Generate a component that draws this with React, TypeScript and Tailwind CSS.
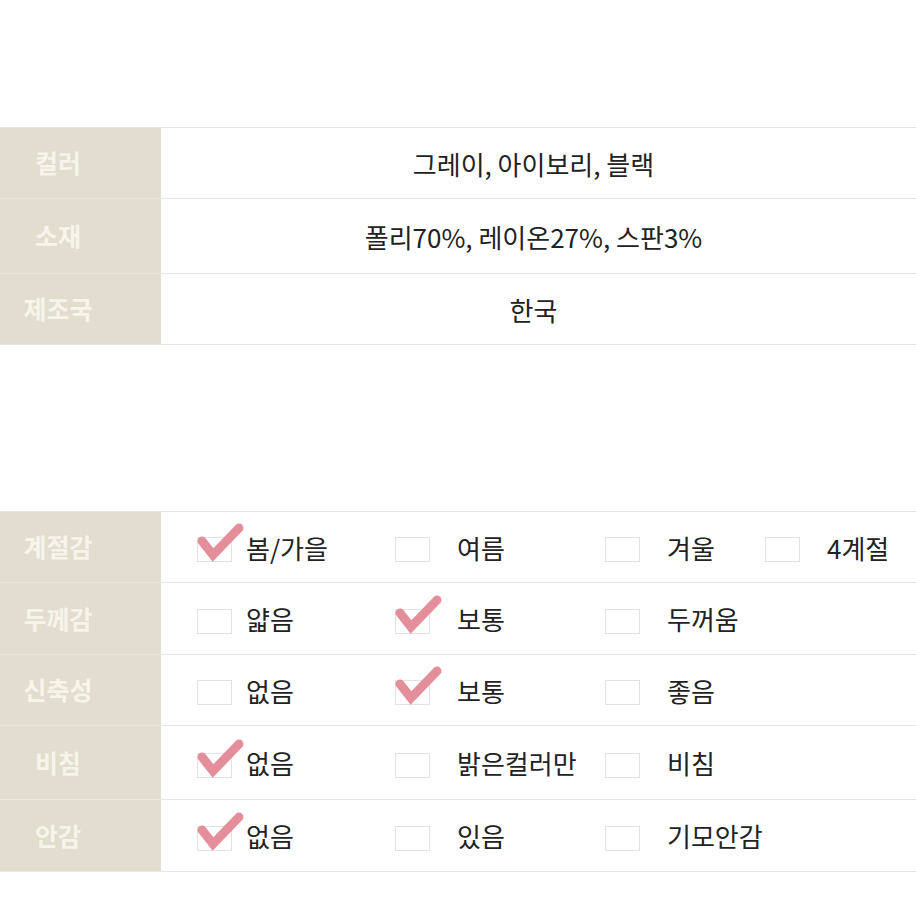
import React from "react";

const font = { fontFamily: '"Noto Sans CJK KR", "Noto Sans", sans-serif' };

type Opt = { label: string; checked?: boolean };

const topRows = [
  { label: "컬러", value: "그레이, 아이보리, 블랙", h: "h-[71px]" },
  { label: "소재", value: "폴리70%, 레이온27%, 스판3%", h: "h-[75px]" },
  { label: "제조국", value: "한국", h: "h-[72px]" },
];

const bottomRows: { label: string; h: string; opts: Opt[] }[] = [
  {
    label: "계절감",
    h: "h-[71px]",
    opts: [
      { label: "봄/가을", checked: true },
      { label: "여름" },
      { label: "겨울" },
      { label: "4계절" },
    ],
  },
  {
    label: "두께감",
    h: "h-[72px]",
    opts: [{ label: "얇음" }, { label: "보통", checked: true }, { label: "두꺼움" }],
  },
  {
    label: "신축성",
    h: "h-[71px]",
    opts: [{ label: "없음" }, { label: "보통", checked: true }, { label: "좋음" }],
  },
  {
    label: "비침",
    h: "h-[74px]",
    opts: [{ label: "없음", checked: true }, { label: "밝은컬러만" }, { label: "비침" }],
  },
  {
    label: "안감",
    h: "h-[73px]",
    opts: [{ label: "없음", checked: true }, { label: "있음" }, { label: "기모안감" }],
  },
];

function Check() {
  return (
    <svg
      className="absolute left-[-1px] top-[-16px]"
      width="48"
      height="40"
      viewBox="0 0 48 40"
    >
      <polyline
        points="5,19 16,33 42,6"
        fill="none"
        stroke="#e48e9b"
        strokeWidth="9"
        strokeLinecap="round"
        strokeLinejoin="miter"
      />
    </svg>
  );
}

function Box({ checked }: { checked?: boolean }) {
  return (
    <div className="relative w-[35px] h-[25px] border border-[#e2e2e2] bg-white shrink-0 mt-[5px]">
      {checked && <Check />}
    </div>
  );
}

function Label({ text }: { text: string }) {
  return (
    <div className="w-[161px] shrink-0 h-full bg-[#e3ddcf] flex items-center">
      <span className="w-[116px] text-center text-[25px] font-bold text-[#f7f4ec]">
        {text}
      </span>
    </div>
  );
}

export default function App() {
  return (
    <div className="w-[916px] h-[916px] bg-white overflow-hidden" style={font}>
      <div className="pt-[127px]">
        {topRows.map((r, i) => (
          <div
            key={i}
            className={`flex ${r.h} border-t border-[#e6e6e6] ${i === topRows.length - 1 ? "border-b" : ""}`}
          >
            <Label text={r.label} />
            <div className="flex-1 flex items-center justify-center pr-[10px] text-[26px] text-[#222]">
              {r.value}
            </div>
          </div>
        ))}
      </div>

      <div className="mt-[166px]">
        {bottomRows.map((r, i) => (
          <div
            key={i}
            className={`flex ${r.h} border-t border-[#e6e6e6] ${i === bottomRows.length - 1 ? "border-b" : ""}`}
          >
            <Label text={r.label} />
            <div className="flex-1 grid grid-cols-[198px_210px_160px_1fr] items-center pl-[36px]">
              {r.opts.map((o, j) => (
                <div
                  key={j}
                  className={`flex items-center ${j === 0 ? "gap-[14px]" : "gap-[27px]"}`}
                >
                  <Box checked={o.checked} />
                  <span className="text-[26px] text-[#222] whitespace-nowrap">
                    {o.label}
                  </span>
                </div>
              ))}
            </div>
          </div>
        ))}
      </div>
    </div>
  );
}
